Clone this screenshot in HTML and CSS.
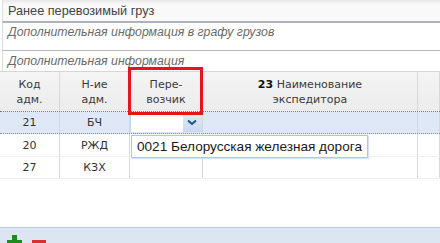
FILE: index.html
```html
<!DOCTYPE html>
<html lang="ru">
<head>
    <meta charset="UTF-8">
    <title>Перевозчики</title>
    <link rel="stylesheet" href="styles.css">
</head>
<body>

    <div class="form">
        <div class="field field-cargo">Ранее перевозимый груз</div>
        <div class="field field-info">Дополнительная информация в графу грузов</div>
        <div class="field field-extra">Дополнительная информация</div>

        <div class="grid">
            <div class="row head">
                <div class="cell">Код<br>адм.</div>
                <div class="cell">Н-ие<br>адм.</div>
                <div class="cell">Пере-<br>возчик</div>
                <div class="cell"><span><b>23</b> Наименование<br>экспедитора</span></div>
                <div class="cell"></div>
            </div>
            <div class="row selected">
                <div class="cell">21</div>
                <div class="cell">БЧ</div>
                <div class="cell">
                    <div class="combo">
                        <span class="combo-input"></span>
                        <span class="combo-btn">
                            <svg width="10" height="7" viewBox="0 0 10 7"><path d="M1 1.5 L5 5 L9 1.5" fill="none" stroke="#1f4f8f" stroke-width="2"/></svg>
                        </span>
                    </div>
                </div>
                <div class="cell"></div>
                <div class="cell"></div>
            </div>
            <div class="row">
                <div class="cell">20</div>
                <div class="cell">РЖД</div>
                <div class="cell"></div>
                <div class="cell"></div>
                <div class="cell"></div>
            </div>
            <div class="row last">
                <div class="cell">27</div>
                <div class="cell">КЗХ</div>
                <div class="cell"></div>
                <div class="cell"></div>
                <div class="cell"></div>
            </div>

            <!-- highlight and open list lie over the grid -->
            <div class="highlight"></div>
            <div class="dropdown">0021 Белорусская железная дорога</div>
        </div>

        <div class="blank"></div>

        <div class="toolbar">
            <span class="tool-add"></span>
            <span class="tool-remove"></span>
        </div>
    </div>

</body>
</html>
```

FILE: styles.css
```css
body {
    margin: 0;
    width: 440px;
    height: 243px;
    overflow: hidden;
    font-family: "DejaVu Sans", Verdana, sans-serif;
    color: #333;
    background: #fff;
}

.form {
    display: flex;
    flex-direction: column;
    height: 243px;
}

.field {
    padding-left: 5px;
    font-family: "Liberation Sans", Arial, sans-serif;
    font-size: 12.7px;
    border-bottom: 1px solid #b4b8c4;
    border-left: 1px solid #dcdde2;
    margin-left: 2px;
}

.field-cargo {
    height: 21px;
    line-height: 23px;
    color: #444;
    background: linear-gradient(#e8e8e8, #f8f8f8 4px, #fafafa);
    border-bottom: 2px solid #aeb2be;
}

.field-info {
    height: 27px;
    line-height: 19px;
    font-size: 12.3px;
    font-style: italic;
    color: #6a6a6a;
}

.field-extra {
    height: 20px;
    line-height: 20px;
    font-size: 12.3px;
    font-style: italic;
    color: #6a6a6a;
    border-bottom: none;
    overflow: hidden;
}

.grid {
    position: relative;
    border-top: 1px solid #d6d6d6;
}

.row {
    display: grid;
    grid-template-columns: 60px 70px 73px 215px 1fr;
    height: 22px;
    font-size: 11px;
}

.cell {
    border-right: 1px solid #d8d8d8;
    display: flex;
    align-items: center;
    justify-content: center;
    text-align: center;
}

.head {
    height: 39px;
    line-height: 15px;
    color: #3a3a3a;
    background: linear-gradient(#f4f4f4, #ececec);
    border-bottom: 1px dotted #777;
}

.head b {
    color: #111;
}

.selected {
    background: #dfe8f6;
    height: 21px;
    border-bottom: 1px dotted #888;
}

.row.last {
    height: 21px;
    border-bottom: 1px solid #ececec;
}

.row + .row:not(.selected) {
    border-bottom: 1px solid #f0f0f0;
}

.combo {
    display: flex;
    width: 71px;
    height: 18px;
    margin-left: -1px;
    background: #fff;
    border-left: 1px solid #c4d6ee;
}

.combo-input {
    flex: 1;
}

.combo-btn {
    width: 19px;
    display: flex;
    align-items: center;
    justify-content: center;
    background: linear-gradient(#dce8f7, #c9daf0);
}

.highlight {
    position: absolute;
    left: 128px;
    top: -5px;
    width: 69px;
    height: 42px;
    border: 3px solid #e8141c;
}

.dropdown {
    position: absolute;
    left: 131px;
    top: 63px;
    width: 230px;
    height: 21px;
    padding-left: 5px;
    white-space: nowrap;
    overflow: hidden;
    font-family: "Liberation Sans", Arial, sans-serif;
    font-size: 13.6px;
    line-height: 21px;
    color: #1a1a1a;
    background: #fff;
    border: 1px solid #aac8ee;
    box-shadow: 1px 1px 1px #d4e2f4;
}

.blank {
    flex: 1;
}

.toolbar {
    height: 15px;
    background: #dce6f3;
    border-top: 1px solid #b9cbe3;
    display: flex;
    gap: 10px;
    padding-left: 7px;
    overflow: hidden;
}

.tool-add {
    position: relative;
    width: 15px;
    height: 15px;
    margin-top: 7px;
}

.tool-add::before,
.tool-add::after {
    content: "";
    position: absolute;
    background: #1f8a1f;
}

.tool-add::before {
    left: 5px;
    top: 0;
    width: 5px;
    height: 15px;
}

.tool-add::after {
    left: 0;
    top: 5px;
    width: 15px;
    height: 5px;
}

.tool-remove {
    width: 14px;
    height: 5px;
    margin-top: 12px;
    background: #d83030;
}
```
